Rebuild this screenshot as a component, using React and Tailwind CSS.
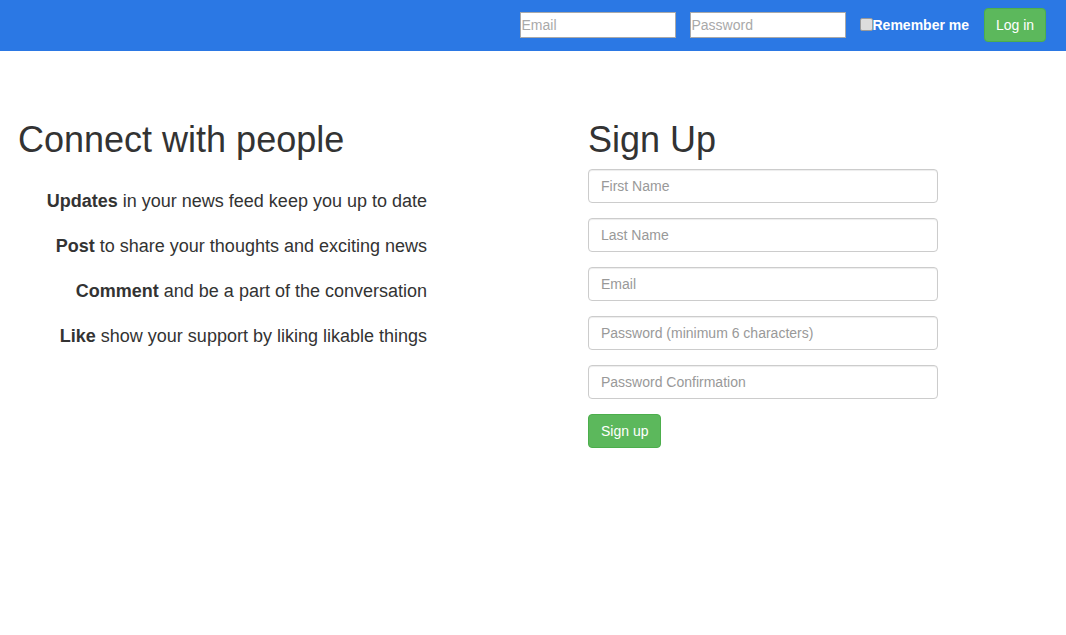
import React from "react";

const features = [
  { bold: "Updates", rest: "in your news feed keep you up to date" },
  { bold: "Post", rest: "to share your thoughts and exciting news" },
  { bold: "Comment", rest: "and be a part of the conversation" },
  { bold: "Like", rest: "show your support by liking likable things" },
];

const signupFields = [
  "First Name",
  "Last Name",
  "Email",
  "Password (minimum 6 characters)",
  "Password Confirmation",
];

export default function App() {
  return (
    <div className="min-h-[635px] bg-white text-[#333] font-['Liberation_Sans',Arial,sans-serif]">
      {/* Top navbar with login form */}
      <nav className="h-[51px] pb-px bg-[#2b78e4] flex items-center justify-end pr-[20px]">
        <input
          type="email"
          placeholder="Email"
          className="w-[156px] h-[26px] bg-white border border-[#a9a9a9] px-px text-[14px] text-[#333] placeholder:text-[#a9a9a9] outline-none"
        />
        <input
          type="password"
          placeholder="Password"
          className="ml-[14px] w-[156px] h-[26px] bg-white border border-[#a9a9a9] px-px text-[14px] text-[#333] placeholder:text-[#a9a9a9] outline-none"
        />
        <label className="ml-[14px] flex items-center text-white font-bold text-[14px]">
          <input
            type="checkbox"
            className="appearance-none m-0 w-[13px] h-[13px] -mt-[2px] bg-[#ddd] border border-[#999] rounded-[2px]"
          />
          Remember me
        </label>
        <button className="ml-[15px] w-[62px] h-[34px] bg-[#5cb85c] border border-[#4cae4c] rounded-[4px] text-white text-[14px]">
          Log in
        </button>
      </nav>

      <div className="flex pt-[69px]">
        {/* Left column */}
        <div className="w-[572px] pl-[18px]">
          <h1 className="text-[36px] leading-[40px]">Connect with people</h1>
          <div className="w-[409px] text-right text-[18px] mt-[29px]">
            {features.map((f) => (
              <p key={f.bold} className="leading-[25px] mb-[20px]">
                <b>{f.bold}</b> {f.rest}
              </p>
            ))}
          </div>
        </div>

        {/* Right column: sign up */}
        <div className="ml-[16px] w-[350px]">
          <h1 className="text-[36px] leading-[40px] mb-[9px]">Sign Up</h1>
          <form className="flex flex-col gap-[15px]">
            {signupFields.map((p) => (
              <input
                key={p}
                type="text"
                placeholder={p}
                className="w-[350px] h-[34px] px-[12px] border border-[#ccc] rounded-[4px] text-[14px] text-[#555] placeholder:text-[#999] outline-none shadow-[inset_0_1px_1px_rgba(0,0,0,0.075)]"
              />
            ))}
            <div>
              <button
                type="button"
                className="h-[34px] px-[12px] bg-[#5cb85c] border border-[#4cae4c] rounded-[4px] text-white text-[14px]"
              >
                Sign up
              </button>
            </div>
          </form>
        </div>
      </div>
    </div>
  );
}
